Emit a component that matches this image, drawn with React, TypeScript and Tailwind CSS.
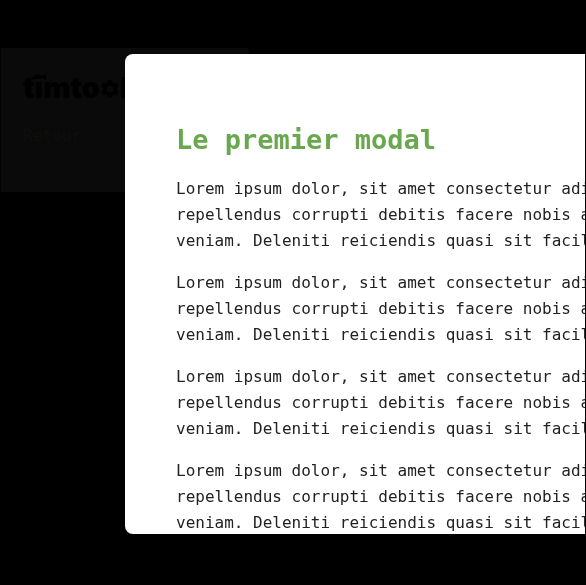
const lines = [
  "Lorem ipsum dolor, sit amet consectetur adipisicing elit.",
  "repellendus corrupti debitis facere nobis aspernatur.",
  "veniam. Deleniti reiciendis quasi sit facilis dolores.",
];

function Gear() {
  return (
    <svg viewBox="0 0 24 24" className="mx-px mt-0.5 h-5 w-[18px]" aria-hidden="true">
      <circle cx="12" cy="12" r="7" fill="none" stroke="#000" strokeWidth="5" />
      <path
        d="M12 0v4M12 20v4M1.6 6l3.5 2M18.9 16l3.5 2M1.6 18l3.5-2M18.9 8l3.5-2"
        stroke="#000"
        strokeWidth="6"
      />
    </svg>
  );
}

function Header() {
  return (
    <header className="ml-px mt-12 h-36 w-[248px] rounded-tr bg-[#0a0a0a] pl-[22px] pt-5">
      <div className="flex h-10 items-center font-['Inter',sans-serif] text-[29px] font-black leading-10 text-black">
        <span>t</span>
        <span className="relative">
          ı
          <svg viewBox="0 0 16 6" className="absolute -left-1 top-1.5 h-1.5 w-4" aria-hidden="true">
            <path d="M0 5C2 1 8-1 12 2l3-2v6l-3-2Q8 6 0 5Z" fill="#000" />
          </svg>
        </span>
        <span>mto</span>
        <Gear />
        <span>l</span>
      </div>
      <a
        href="#retour"
        className="-ml-3 mt-4 flex items-center gap-2 font-['DejaVu_Sans_Mono',monospace] text-base leading-6 text-[#0f0f0c]"
      >
        <svg viewBox="0 0 4 8" className="h-2 w-1" aria-hidden="true">
          <path d="M4 0 1 4l3 4" fill="none" stroke="currentColor" />
        </svg>
        Retour
      </a>
    </header>
  );
}

export default function App() {
  return (
    <div className="flow-root min-h-screen overflow-hidden bg-black">
      <Header />
      <div className="fixed inset-0 flex pb-[51px] pl-[125px] pr-px pt-[54px]">
        <section
          role="dialog"
          aria-labelledby="modal-title"
          className="min-w-0 flex-1 overflow-hidden rounded-l-lg bg-white px-[51px] pt-[66px] text-[#222]"
        >
          <h1
            id="modal-title"
            className="whitespace-nowrap font-['DejaVu_Sans_Mono',monospace] text-[27px] font-bold leading-10 text-[#6aa84f]"
          >
            Le premier modal
          </h1>
          <div className="mt-4 flex flex-col gap-4 font-['DejaVu_Sans_Mono',monospace] text-base leading-[26px]">
            {[0, 1, 2, 3].map((n) => (
              <p key={n} className="whitespace-nowrap">
                {lines.map((line) => (
                  <span key={line} className="block">
                    {line}
                  </span>
                ))}
              </p>
            ))}
          </div>
        </section>
      </div>
    </div>
  );
}
